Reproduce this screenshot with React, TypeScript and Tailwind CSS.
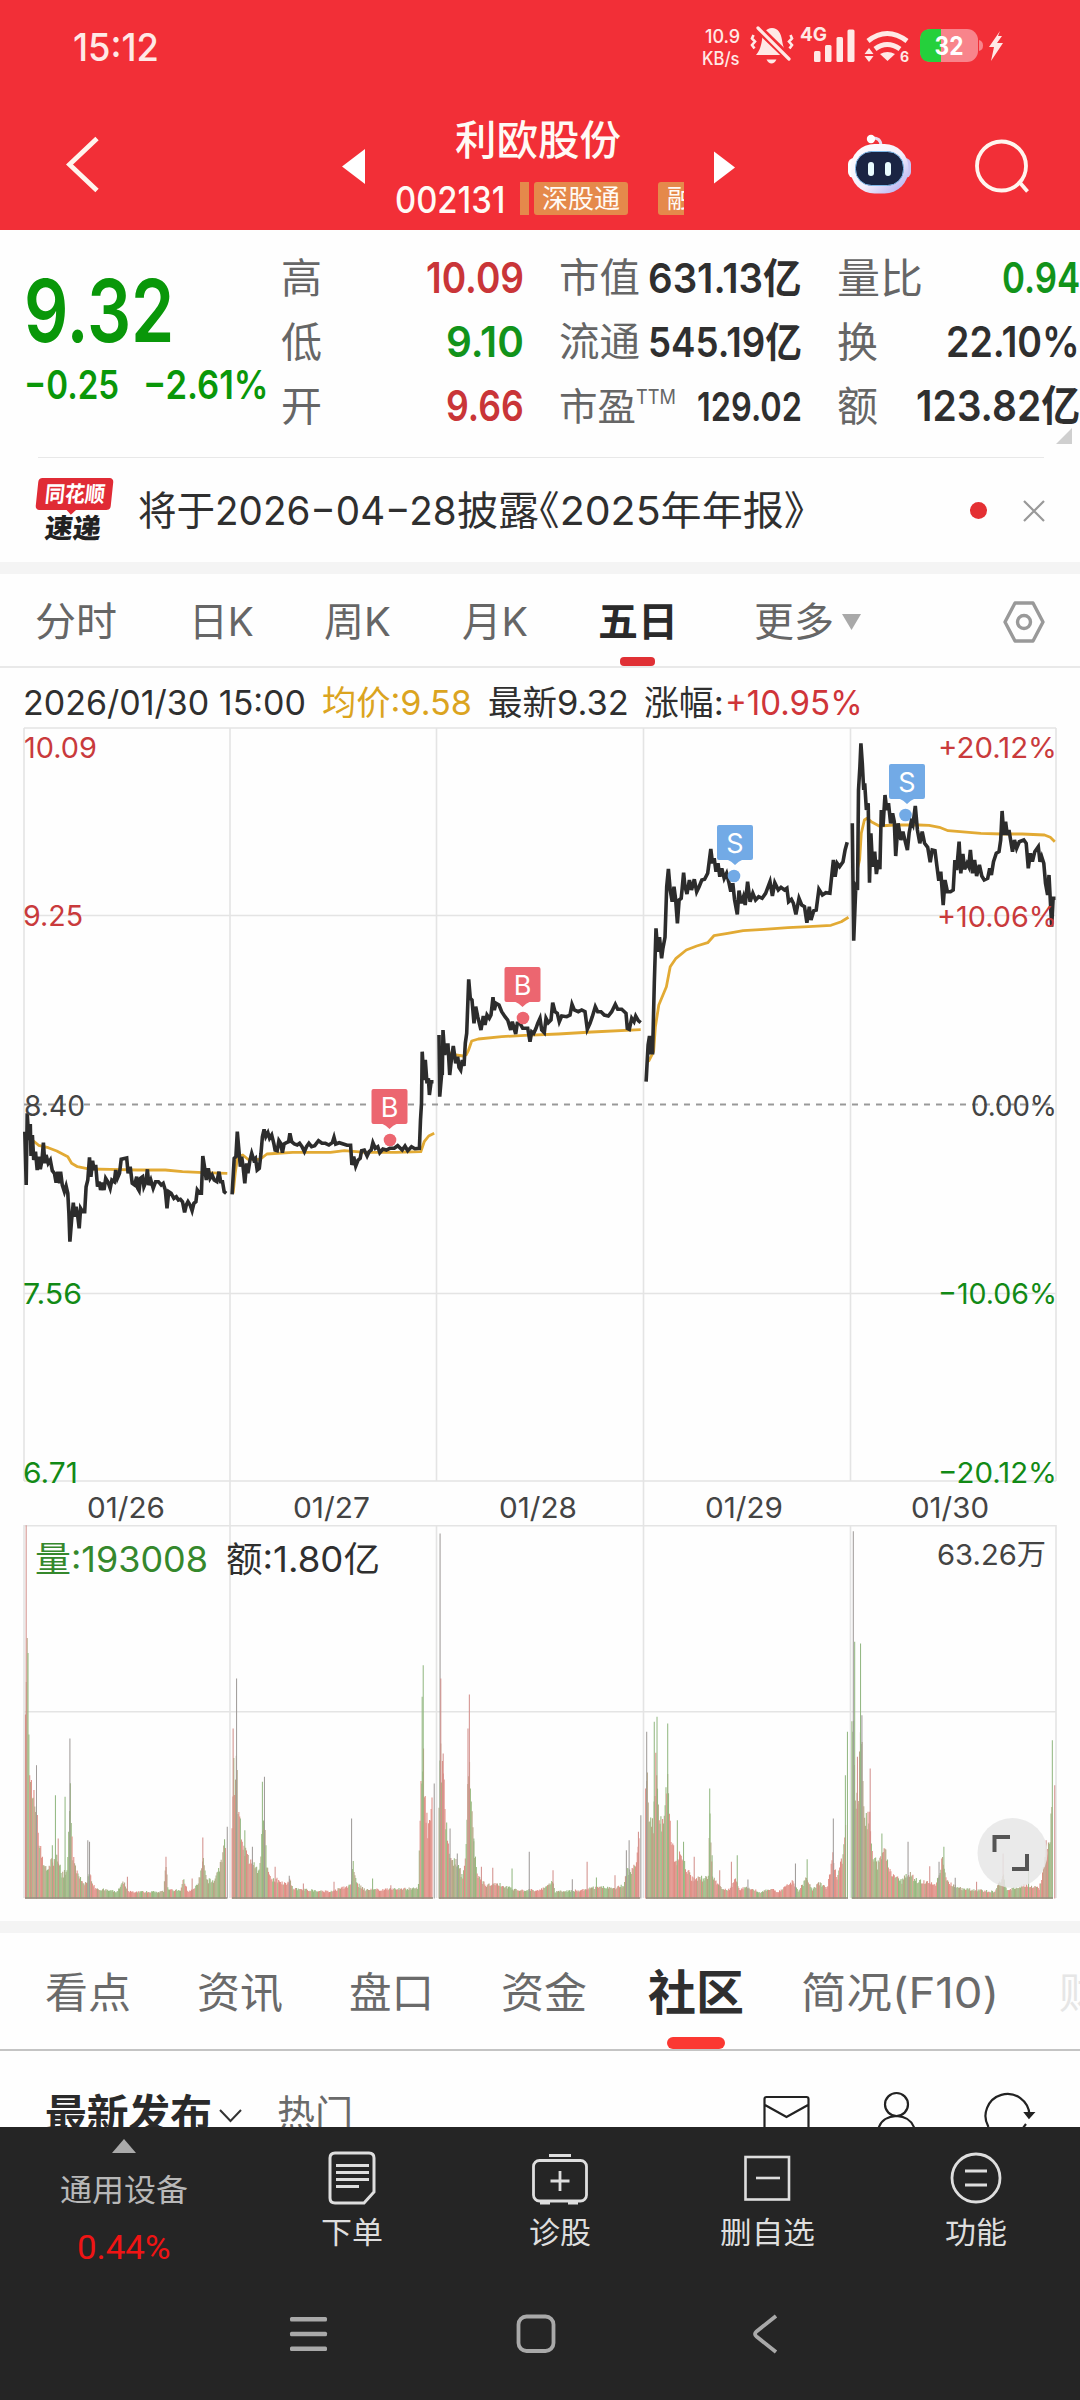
import React, { useLayoutEffect, useRef, useState } from 'react';

type FitProps = { className?: string; children: React.ReactNode };

/** Single line of text condensed or expanded to fill the width of its box. */
function Fit({ className = '', children }: FitProps) {
  const outer = useRef<HTMLSpanElement>(null);
  const inner = useRef<HTMLSpanElement>(null);
  const [scale, setScale] = useState(1);
  useLayoutEffect(() => {
    if (outer.current && inner.current) {
      setScale(outer.current.clientWidth / inner.current.offsetWidth);
    }
  }, []);
  return (
    <span ref={outer} className={'inline-block shrink-0 whitespace-nowrap leading-none ' + className}>
      <span ref={inner} className="inline-block origin-left" style={{ transform: `scaleX(${scale})` }}>
        {children}
      </span>
    </span>
  );
}

/* ---------- status bar ---------- */

function StatusBar() {
  return (
    <div className="flex h-[94px] items-center pl-[73px] text-[#ffe9e6]">
      <Fit className="w-[86px] text-[38px] font-medium">15:12</Fit>
      <div className="ml-[543px] flex w-[38px] flex-col items-end gap-[4px] font-medium">
        <Fit className="w-[35px] text-[19px]">10.9</Fit>
        <Fit className="w-[38px] text-[18px]">KB/s</Fit>
      </div>
      <svg className="ml-[8px] h-[94px] w-[256px] shrink-0" viewBox="748 0 256 94" fill="#ffe9e6">
        <path d="M756 55c4-5 5-9 6-15 1-7 4-12 10-12 6 0 9 5 10 12 1 6 2 10 6 15z" />
        <path d="M766.500 59.500h10q-2 4-5 4t-5-4z" />
        <path d="M757 27l34 33" stroke="#f22f37" strokeWidth="8" />
        <path d="M758 28l31 31" stroke="#ffe9e6" strokeWidth="3.200" strokeLinecap="round" />
        <path d="M753.500 35l-1.500 3.500 3 3-3 3.500 2.500 3.500M790.500 35l1.500 3.500-3 3 3 3.500-2.500 3.500" stroke="#ffe9e6" strokeWidth="2.600" fill="none" />
        <text x="800" y="41" fontSize="19" fontWeight="700" textLength="27" lengthAdjust="spacingAndGlyphs">4G</text>
        <rect x="814" y="51" width="6.500" height="11" rx="1.500" />
        <rect x="825" y="45" width="6.500" height="17" rx="1.500" />
        <rect x="836.500" y="37" width="6.500" height="25" rx="1.500" />
        <rect x="847.500" y="29.500" width="7" height="32.500" rx="1.500" />
        <g fill="none" stroke="#ffe9e6" strokeWidth="5">
          <path d="M868 41q19-15 39 0" />
          <path d="M875 49q12-9 25 0" />
        </g>
        <path d="M880 54q7.500-4 15 0l-7.500 7z" />
        <path d="M869 48l4.500 6h-9zM869 62l4.500-6h-9z" />
        <text x="900" y="62" fontSize="14" fontWeight="700">6</text>
        <rect x="920" y="29" width="58" height="33" rx="11" fill="#f8848b" />
        <path d="M979 40q4 1 4 5.500t-4 5.500z" fill="#f8848b" />
        <path d="M941 29h-10q-11 0-11 11v11q0 11 11 11h10z" fill="#25d03c" />
        <text x="934.500" y="54.500" fontSize="25" fontWeight="700" fill="#fff" textLength="29" lengthAdjust="spacingAndGlyphs">32</text>
        <path d="M1000 31l-11 16h5l-3 14 12-18h-6l5-7h-4z" />
      </svg>
    </div>
  );
}

/* ---------- title bar ---------- */

function TitleBar() {
  return (
    <div className="flex h-[136px] text-[#fffaf5]">
      <svg className="ml-[60px] h-[136px] w-[50px] shrink-0" viewBox="60 94 50 136">
        <path d="M97 138.500L69.500 164.500 97 190.500" fill="none" stroke="#fff5ee" strokeWidth="4.800" />
      </svg>
      <svg className="ml-[230px] h-[136px] w-[30px] shrink-0" viewBox="340 94 30 136" fill="#fff">
        <path d="M342 166.500L365 149v35z" />
      </svg>
      <div className="ml-[25px] flex w-[289px] flex-col items-start">
        <div className="mt-[26px] h-[46px] pl-[60px]">
          <Fit className="w-[166px] text-[41px] font-medium">利欧股份</Fit>
        </div>
        <div className="mt-[16px] flex h-[33px] w-[289px] items-center overflow-hidden">
          <Fit className="w-[110px] pt-[1px] text-[37px] font-medium">002131</Fit>
          <span className="ml-[15px] h-[33px] w-[9px] shrink-0 bg-[#e5894b]" />
          <span className="ml-[5px] flex h-[33px] w-[94px] shrink-0 items-center justify-center rounded-[3px] bg-[#e5894b]">
            <Fit className="w-[78px] text-[26px]">深股通</Fit>
          </span>
          <span className="ml-[30px] flex h-[33px] w-[94px] shrink-0 items-center rounded-[3px] bg-[#e5894b] pl-[9px] text-[26px] leading-none">
            融
          </span>
        </div>
      </div>
      <svg className="ml-[26px] h-[136px] w-[30px] shrink-0" viewBox="710 94 30 136" fill="#fff">
        <path d="M735 167.500L714 151.500v32z" />
      </svg>
      <svg className="ml-[105px] h-[136px] w-[70px] shrink-0" viewBox="845 94 70 136">
        <defs>
          <linearGradient id="shell" x1="0" x2="1" y1="0" y2="1">
            <stop offset="0" stopColor="#fff" />
            <stop offset="0.55" stopColor="#f4effb" />
            <stop offset="1" stopColor="#a9a6f0" />
          </linearGradient>
        </defs>
        <path d="M871 138q10-1 10 8" fill="none" stroke="#e9dcf0" strokeWidth="3" />
        <circle cx="871" cy="139" r="4.200" fill="#fff" />
        <rect x="848" y="158" width="12" height="20" rx="6" fill="#fff" />
        <rect x="899" y="158" width="12" height="20" rx="6" fill="#c9c4f3" />
        <rect x="850.500" y="144" width="58" height="49.500" rx="24" fill="url(#shell)" />
        <rect x="855.500" y="151.500" width="48" height="34" rx="16" fill="#1a2443" stroke="#7db7e8" strokeWidth="1" />
        <rect x="868" y="162" width="6" height="14" rx="3" fill="#eafcff" />
        <rect x="885" y="162" width="6" height="14" rx="3" fill="#eafcff" />
      </svg>
      <svg className="ml-[55px] h-[136px] w-[65px] shrink-0" viewBox="970 94 65 136" fill="none" stroke="#fff5ee" strokeWidth="3.800">
        <circle cx="1001.500" cy="166" r="24.500" />
        <path d="M1018.500 181l9 10.500" />
      </svg>
    </div>
  );
}

/* ---------- quote summary ---------- */

type CellProps = { label: React.ReactNode; children: React.ReactNode };

function Cell({ label, children }: CellProps) {
  return (
    <div className="flex h-[64px] items-center justify-between text-[#666]">
      {label}
      {children}
    </div>
  );
}

function Quote() {
  return (
    <div className="flex h-[227px] overflow-hidden">
      <div className="w-[281px] shrink-0 pl-[24px] text-[#099709]">
        <div className="mt-[37px] h-[86px]">
          <Fit className="w-[150px] text-[87px] font-semibold">9.32</Fit>
        </div>
        <div className="mt-[12px] flex h-[40px]">
          <Fit className="w-[95px] text-[39px] font-semibold">−0.25</Fit>
          <Fit className="ml-[24px] w-[126px] text-[39px] font-semibold">−2.61%</Fit>
        </div>
      </div>
      <div className="w-[243px] shrink-0 pt-[16px]">
        <Cell label={<Fit className="w-[41px] text-[41px]">高</Fit>}>
          <Fit className="w-[98px] text-[42px] font-semibold text-[#c93538]">10.09</Fit>
        </Cell>
        <Cell label={<Fit className="w-[41px] text-[41px]">低</Fit>}>
          <Fit className="w-[78px] text-[42px] font-semibold text-[#12931a]">9.10</Fit>
        </Cell>
        <Cell label={<Fit className="w-[41px] text-[41px]">开</Fit>}>
          <Fit className="w-[78px] text-[42px] font-semibold text-[#c93538]">9.66</Fit>
        </Cell>
      </div>
      <div className="ml-[35px] w-[243px] shrink-0 pt-[16px]">
        <Cell label={<Fit className="w-[81px] text-[40px]">市值</Fit>}>
          <Fit className="w-[154px] text-[41px] font-semibold text-[#2f2f2f]">631.13亿</Fit>
        </Cell>
        <Cell label={<Fit className="w-[81px] text-[40px]">流通</Fit>}>
          <Fit className="w-[154px] text-[41px] font-semibold text-[#2f2f2f]">545.19亿</Fit>
        </Cell>
        <Cell
          label={
            <span className="flex items-start">
              <Fit className="w-[77px] text-[38px]">市盈</Fit>
              <Fit className="w-[40px] text-[20px]">TTM</Fit>
            </span>
          }
        >
          <Fit className="w-[105px] text-[39px] font-semibold text-[#2f2f2f]">129.02</Fit>
        </Cell>
      </div>
      <div className="relative ml-[35px] w-[243px] shrink-0 pt-[16px]">
        <Cell label={<Fit className="w-[86px] text-[41px]">量比</Fit>}>
          <Fit className="w-[78px] text-[42px] font-semibold text-[#12931a]">0.94</Fit>
        </Cell>
        <Cell label={<Fit className="w-[41px] text-[41px]">换</Fit>}>
          <Fit className="w-[134px] text-[42px] font-semibold text-[#2f2f2f]">22.10%</Fit>
        </Cell>
        <Cell label={<Fit className="w-[41px] text-[41px]">额</Fit>}>
          <Fit className="w-[164px] text-[42px] font-semibold text-[#2f2f2f]">123.82亿</Fit>
        </Cell>
        <svg className="absolute right-[8px] bottom-[13px] h-[16px] w-[16px]" viewBox="0 0 16 16">
          <path d="M16 0v16H0z" fill="#cfcfcf" />
        </svg>
      </div>
    </div>
  );
}

function Notice() {
  return (
    <div className="flex h-[105px] items-center">
      <div className="flex w-[138px] shrink-0 flex-col items-start pl-[37px]">
        <div className="relative flex h-[32px] w-[75px] -skew-x-6 items-center justify-center rounded-[4px] bg-[#e02b35]">
          <span className="absolute bottom-[-3px] left-[32px] h-[8px] w-[8px] rotate-45 bg-[#e02b35]" />
          <Fit className="w-[60px] text-[22px] font-bold text-white">同花顺</Fit>
        </div>
        <div className="mt-[5px] ml-[8px] -skew-x-6">
          <Fit className="w-[56px] text-[27px] font-black text-[#222]">速递</Fit>
        </div>
      </div>
      <Fit className="w-[319px] text-[40px] text-[#2f2f2f]">将于2026−04−28</Fit>
      <Fit className="w-[347px] text-[40px] text-[#2f2f2f] [font-feature-settings:'halt']">披露《2025年年报》</Fit>
      <span className="ml-[166px] h-[17px] w-[17px] shrink-0 rounded-full bg-[#e43033]" />
      <svg className="ml-[36px] h-[22px] w-[22px] shrink-0" viewBox="0 0 22 22">
        <path d="M1 1l20 20M21 1L1 21" stroke="#999" strokeWidth="2.200" />
      </svg>
    </div>
  );
}

/* ---------- chart period tabs ---------- */

function PeriodTabs() {
  return (
    <div className="flex h-[94px] items-center border-b-2 border-[#e9e9e9] pt-[4px] pl-[35px] text-[40px] text-[#666]">
      <Fit className="w-[82px]">分时</Fit>
      <Fit className="ml-[72px] w-[65px]">日K</Fit>
      <Fit className="ml-[70px] w-[67px]">周K</Fit>
      <Fit className="ml-[71px] w-[66px]">月K</Fit>
      <div className="relative ml-[70px] flex h-[88px] items-center">
        <Fit className="w-[80px] font-bold text-[#2a2a2a]">五日</Fit>
        <span className="absolute bottom-0 left-[22px] h-[9px] w-[35px] rounded-[4px] bg-[#e03035]" />
      </div>
      <Fit className="ml-[76px] w-[80px]">更多</Fit>
      <svg className="ml-[8px] h-[16px] w-[19px]" viewBox="0 0 19 16">
        <path d="M0 0h19L9.500 16z" fill="#a9a9a9" />
      </svg>
      <svg className="ml-[142px] h-[42px] w-[42px]" viewBox="0 0 42 42" fill="none" stroke="#999" strokeWidth="3.400">
        <path d="M12 2h18l10 19L30 40H12L2 21z" strokeLinejoin="round" />
        <circle cx="21" cy="21" r="6.500" />
      </svg>
    </div>
  );
}

function InfoLine() {
  return (
    <div className="flex h-[57px] items-center pt-[12px] pl-[23px] text-[34px] text-[#2f2f2f]">
      <Fit className="w-[283px]">2026/01/30 15:00</Fit>
      <Fit className="ml-[16px] w-[150px] text-[#dba41f]">均价:9.58</Fit>
      <Fit className="ml-[16px] w-[141px]">最新9.32</Fit>
      <Fit className="ml-[15px] w-[80px]">涨幅:</Fit>
      <Fit className="ml-[1px] w-[138px] text-[#cf3539]">+10.95%</Fit>
    </div>
  );
}

/* ---------- chart ---------- */

type Frame = { x: number; y: number; sx: number; sy: number };

const LEFT: Frame = { x: 0, y: 1000, sx: 2.904, sy: 3 };
const MIDDLE: Frame = { x: 425, y: 960, sx: 3, sy: 3 };
const RIGHT: Frame = { x: 540, y: 700, sx: 2.904, sy: 3 };

/** Projects "x,y x,y" samples of a frame on to the canvas. */
function project(samples: string, f: Frame): string {
  return samples
    .split(' ')
    .map((pair) => {
      const [x, y] = pair.split(',').map(Number);
      return `${(f.x + x / f.sx).toFixed(1)},${(f.y + y / f.sy).toFixed(1)}`;
    })
    .join(' ');
}

const PRICE: [string, Frame][] = [
  ['72,395 76,555 79,340 84,420 88,372 90,468 94,405 98,480 103,455 108,510 113,470 117,508 122,480 126,428 130,490 134,465 140,490 146,480 152,512 158,520 163,548 168,515 173,550 176,515 181,555 187,575 192,558 197,580 200,640 203,725 208,660 213,608 217,650 221,620 226,650 230,685 234,625 240,635 246,635 250,560 255,540 260,472 264,530 269,482 273,510 278,495 283,560 288,545 292,570 297,548 302,570 307,535 313,545 320,565 325,540 332,545 336,510 341,535 347,520 352,478 368,474 372,520 378,500 384,550 391,555 397,530 400,565 404,572 408,535 414,530 418,560 424,545 428,508 432,555 438,540 445,565 452,545 460,545 468,555 474,550 480,570 485,625 490,575 497,580 505,595 512,590 518,600 524,598 530,605 536,637 541,615 546,605 552,615 558,632 563,610 569,605 573,570 580,580 585,580 589,468 594,500 599,540 605,505 610,535 616,525 622,540 630,545 636,515 641,545 646,545 651,575 657,580', LEFT],
  ['674,583 680,475 685,470 689,395 693,440 698,500 702,470 706,500 711,550 716,490 720,520 726,480 731,460 737,480 742,475 747,510 753,505 758,460 762,410 767,388 772,410 778,398 783,415 789,405 795,430 799,450 805,452 810,422 815,430 820,458 825,432 832,428 838,425 842,400 847,425 855,432 863,435 870,430 877,440 884,455 890,440 897,430 905,440 914,437 925,422 935,430 945,430 955,435 965,428 970,412 975,432 985,428 997,432 1008,436 1018,436 1022,495 1027,470 1033,498 1040,480 1046,475 1050,452 1058,450 1066,468 1072,455 1078,450 1083,428 1090,445 1097,440 1103,458 1112,447 1122,450 1132,445 1145,445 1155,437 1168,450 1176,438 1184,452 1195,440 1205,446 1218,445 1221,360 1224,310 1226,155 1231,240 1235,180 1240,250 1244,235 1247,285 1252,245 1259,245', LEFT],
  ['42,225 44,410 50,340 52,340 54,210 59,285 63,255 69,255 74,345 80,290 85,258 92,310 98,290 102,322 107,330 112,300 117,318 121,250 125,220 131,58 136,115 141,120 147,190 152,140 158,170 168,210 175,168 180,195 186,165 193,175 198,165 204,112 208,150 213,130 222,135 230,155 240,170 248,180 257,210 262,185 272,222 277,190 285,190 293,205 300,205 308,205 315,245 320,215 326,220 333,205 338,190 345,175 350,210 358,218 363,175 370,188 378,180 383,128 390,155 397,160 403,185 410,168 425,170 435,165 441,133 448,150 460,155 470,150 480,155 487,208 495,190 502,170 511,140 518,155 528,155 538,165 550,168 560,155 571,133 578,148 590,148 603,160 607,205 613,208 620,175 627,185 632,168 640,182 647,188', MIDDLE],
  ['308,1145 314,1035 318,1008 322,1058 327,1058 332,850 337,685 342,755 347,712 353,775 357,745 363,712 368,560 373,507 378,570 384,605 389,560 394,600 399,670 404,600 410,595 413,565 417,518 421,560 427,582 434,540 440,570 448,538 455,575 462,560 470,540 478,538 487,520 492,480 496,447 501,490 506,475 511,515 517,490 522,530 528,505 535,535 542,520 548,545 554,575 560,550 565,600 573,643 578,572 585,610 591,590 596,615 603,545 610,605 618,580 626,600 635,590 645,595 655,580 668,545 675,588 682,548 692,570 700,562 710,570 717,565 722,605 730,598 736,610 743,643 752,595 760,615 768,620 775,668 782,620 787,660 795,632 802,630 810,568 820,585 830,578 842,580 848,520 852,480 857,530 863,490 870,500 880,485 886,450 892,427', RIGHT],
  ['907,370 911,722 917,560 922,570 925,270 929,200 932,130 936,190 940,270 943,250 948,330 953,310 957,548 961,400 966,500 972,455 977,522 983,480 987,508 991,330 996,380 1002,285 1007,330 1012,310 1018,370 1024,340 1029,365 1033,468 1040,370 1048,420 1054,395 1062,430 1067,450 1072,400 1078,365 1083,375 1090,318 1096,390 1103,430 1110,395 1117,430 1126,442 1133,487 1139,450 1147,452 1153,500 1158,542 1164,515 1171,615 1176,540 1183,575 1192,575 1200,570 1205,480 1210,510 1217,425 1222,520 1228,462 1233,508 1240,490 1245,500 1250,450 1256,520 1262,480 1268,528 1276,495 1283,528 1290,540 1300,535 1306,505 1311,525 1317,485 1325,460 1333,455 1338,420 1342,333 1347,405 1352,365 1357,405 1362,390 1372,455 1378,420 1384,445 1392,425 1405,420 1412,430 1418,505 1424,460 1430,485 1437,455 1447,440 1452,485 1457,470 1463,490 1468,550 1474,585 1478,525 1482,600 1486,680 1490,595 1497,595', RIGHT],
];

const AVERAGE: [string, Frame][] = [
  ['90,420 100,425 112,436 140,443 165,453 197,470 208,490 225,500 260,507 320,508 400,510 480,510 530,515 590,518 660,520', LEFT],
  ['677,580 683,520 690,470 705,465 720,478 755,478 775,462 850,457 960,457 1000,452 1060,457 1150,457 1222,455 1232,425 1245,408 1261,400', LEFT],
  ['65,275 92,285 115,288 124,284 130,272 140,243 160,237 230,230 300,226 400,222 500,216 647,209', MIDDLE],
  ['315,1085 330,1055 335,980 345,915 367,860 378,800 395,775 425,750 455,738 487,728 505,707 545,700 590,692 650,688 720,683 780,680 845,676 875,665 896,652', RIGHT],
  ['922,505 928,480 933,400 942,360 950,355 962,365 985,378 1030,375 1100,375 1130,376 1160,382 1185,392 1220,395 1280,400 1340,402 1400,402 1465,405 1482,412 1495,425', RIGHT],
];

type VolumeDay = { level: number[][]; spikes: number[][]; red: number };

const pairs = (s: string): number[][] => s.split(' ').map((p) => p.split(',').map(Number));

const VOLUME: VolumeDay[] = [
  {
    red: 0.35,
    level: pairs('74,490 79,730 82,690 86,350 95,290 105,290 110,190 120,130 135,80 150,110 170,120 180,70 195,80 203,340 208,200 212,120 225,70 245,40 262,70 275,30 340,20 360,50 372,20 475,20 482,100 488,25 525,25 533,60 545,20 575,40 590,110 600,55 620,50 640,100 655,170'),
    spikes: pairs('76,1120 106,400 161,310 169,180 189,305 203,480 255,175 260,170 482,125 589,183 652,170 660,215 370,65 558,60 152,160'),
  },
  {
    red: 0.5,
    level: pairs('674,200 678,430 682,330 687,450 692,250 700,180 715,130 735,110 752,70 758,130 763,250 770,180 776,90 790,60 830,45 842,60 850,30 960,20 1020,40 1025,110 1035,45 1060,25 1215,30 1222,300 1228,450 1235,300 1242,200 1255,280'),
    spikes: pairs('677,510 687,660 698,240 711,205 733,155 762,350 768,365 799,95 840,68 970,50 1021,240 1082,60 1135,40 1226,605 1229,700 1261,345 881,45'),
  },
  {
    red: 0.4,
    level: pairs('1275,250 1279,500 1283,350 1287,410 1295,220 1310,120 1325,110 1345,60 1352,140 1358,300 1364,450 1369,260 1378,130 1390,60 1410,40 1440,45 1500,25 1568,25 1605,50 1612,20 1700,25 1735,35 1780,30 1812,40 1820,80 1845,90 1857,170'),
    spikes: pairs('1278,1095 1280,660 1287,435 1307,210 1363,612 1359,510 1376,180 1328,135 1398,95 1431,92 1487,90 1537,140 1606,85 1662,58 1705,110 1732,63 1786,70 1819,145 1827,175 1854,200 1861,250'),
  },
  {
    red: 0.6,
    level: pairs('1875,300 1879,400 1886,230 1898,220 1904,420 1909,350 1916,220 1928,210 1940,400 1946,220 1960,110 1978,130 1993,90 2008,60 2058,60 2061,270 2068,70 2088,35 2118,25 2138,60 2148,25 2168,35 2208,18 2238,30 2258,18 2303,50 2318,20 2343,60 2358,25 2378,45 2403,30 2418,130 2430,60 2448,130 2457,240'),
    spikes: pairs('1878,500 1900,530 1908,545 1939,525 1967,235 1985,170 2016,125 2061,330 2068,130 2090,85 2124,110 2141,130 2172,57 2310,105 2344,118 2420,240 2455,370 2461,500'),
  },
  {
    red: 0.38,
    level: pairs('2474,550 2480,450 2486,280 2493,300 2500,550 2508,300 2518,210 2526,270 2533,140 2548,100 2568,150 2583,80 2618,50 2638,80 2658,55 2718,40 2738,120 2748,50 2788,30 2888,20 2913,70 2923,25 2983,40 3018,30 3033,100 3048,170 3056,300'),
    spikes: pairs('2478,1102 2482,770 2490,425 2499,765 2503,550 2527,390 2561,195 2637,170 2700,97 2727,110 2741,155 2774,62 2836,50 2913,135 2987,100 3038,175 3056,475 3063,340'),
  },
];

const VOLUME_BASE = 1898.5;

type Bar = { x: number; h: number; color: string };

function buildBars(): Bar[] {
  let seed = 7;
  const random = () => {
    seed = (seed * 16807) % 2147483647;
    return seed / 2147483647;
  };
  const bars: Bar[] = [];
  for (const day of VOLUME) {
    const first = day.level[0][0];
    const last = day.level[day.level.length - 1][0];
    let k = 0;
    for (let x = first; x <= last; x += 2.46) {
      while (k < day.level.length - 2 && day.level[k + 1][0] < x) k++;
      const [x0, h0] = day.level[k];
      const [x1, h1] = day.level[k + 1];
      const t = Math.min(1, Math.max(0, (x - x0) / (x1 - x0)));
      const wave = 0.25 * Math.sin(x / 23) + 0.15 * Math.sin(x / 9);
      const pick = random() * 0.7 + 0.15 + wave;
      const color = pick < day.red ? '#e08d84' : random() < 0.45 ? '#b5a583' : '#97b97e';
      bars.push({ x: x / 2.904, h: ((h0 + (h1 - h0) * t) * (0.85 + random() * 0.3)) / 3, color });
    }
    for (const [x, h] of day.spikes) {
      const r = random();
      bars.push({ x: x / 2.904, h: h / 3, color: r < 0.35 ? '#d3918d' : r < 0.7 ? '#94b984' : '#a09c9a' });
    }
  }
  return bars;
}

const BARS = buildBars();

function Marker({ x, y, dotX, dotY, letter, color }: { x: number; y: number; dotX: number; dotY: number; letter: string; color: string }) {
  return (
    <g>
      <path
        transform={`translate(${x} ${y})`}
        d="M2 0H34q2 0 2 2V33q0 2-2 2H25q-3 1-7 5q-4-4-7-5H2q-2 0-2-2V2q0-2 2-2z"
        fill={color}
      />
      <text x={x + 18} y={y + 27.5} textAnchor="middle" fontSize="27" fill="#fff">{letter}</text>
      <circle cx={dotX} cy={dotY} r="6.300" fill={color} />
    </g>
  );
}

type LabelProps = { x: number; y: number; w: number; size?: number; color: string; children: string };

function Label({ x, y, w, size = 29, color, children }: LabelProps) {
  return (
    <text x={x} y={y} fontSize={size} fill={color} textLength={w} lengthAdjust="spacingAndGlyphs">
      {children}
    </text>
  );
}

function Chart() {
  const red = '#c93a3c';
  const green = '#128a16';
  const gray = '#444';
  return (
    <svg className="block h-[1196px] w-[1080px]" viewBox="0 725 1080 1196">
      <g stroke="#e4e4e4" strokeWidth="1.600" fill="none">
        <path d="M24 728H1056M24 915.500H1056M24 1293.500H1056M24 1481H1056" />
        <path d="M24 728V1481M230 728V1481M436.500 728V1481M643.500 728V1481M850.500 728V1481M1056 728V1481" />
        <path d="M24 1525.700H1056M24 1711.700H1056" />
        <path d="M24 1525V1898M230 1481V1898M436.500 1525V1898M643.500 1481V1898M850.500 1525V1898M1056 1525V1898" />
      </g>
      <path d="M24 1104.500H1056" stroke="#999" strokeWidth="1.800" strokeDasharray="6 6" />

      {BARS.map((b, i) => (
        <path key={i} d={`M${b.x.toFixed(2)} ${VOLUME_BASE}v${(-b.h).toFixed(1)}`} stroke={b.color} strokeWidth="1.050" />
      ))}
      <path d="M25 1898H227M232 1898H433M439 1898H640M646 1898H848M852 1898H1053" stroke="#958f80" strokeWidth="1.500" />

      {AVERAGE.map(([samples, frame], i) => (
        <polyline key={i} points={project(samples, frame)} fill="none" stroke="#e2aa34" strokeWidth="2.800" strokeLinejoin="round" />
      ))}
      {PRICE.map(([samples, frame], i) => (
        <polyline key={i} points={project(samples, frame)} fill="none" stroke="#2c2c2c" strokeWidth="3.600" />
      ))}

      <Label x={24} y={758} w={73} color={red}>10.09</Label>
      <Label x={23} y={926} w={60} color={red}>9.25</Label>
      <Label x={24} y={1116} w={61} color={gray}>8.40</Label>
      <Label x={23} y={1304} w={59} color={green}>7.56</Label>
      <Label x={23} y={1483} w={55} color={green}>6.71</Label>
      <Label x={938} y={758} w={119} color={red}>+20.12%</Label>
      <Label x={937} y={927} w={120} color={red}>+10.06%</Label>
      <Label x={971} y={1116} w={86} color={gray}>0.00%</Label>
      <Label x={938} y={1304} w={119} color={green}>−10.06%</Label>
      <Label x={938} y={1483} w={119} color={green}>−20.12%</Label>

      <Label x={87} y={1518} w={78} color={gray}>01/26</Label>
      <Label x={293} y={1518} w={77} color={gray}>01/27</Label>
      <Label x={499} y={1518} w={78} color={gray}>01/28</Label>
      <Label x={705} y={1518} w={78} color={gray}>01/29</Label>
      <Label x={911} y={1518} w={78} color={gray}>01/30</Label>

      <Label x={35} y={1572} w={173} size={35} color="#35882c">量:193008</Label>
      <Label x={226} y={1572} w={154} size={35} color="#2f2f2f">额:1.80亿</Label>
      <Label x={937} y={1565} w={109} size={29} color={gray}>63.26万</Label>

      <Marker x={371.500} y={1089} dotX={390} dotY={1140} letter="B" color="#ec6670" />
      <Marker x={504.500} y={967} dotX={523} dotY={1018} letter="B" color="#ec6670" />
      <Marker x={717} y={825} dotX={734} dotY={876} letter="S" color="#72aae6" />
      <Marker x={889} y={764} dotX={905.500} dotY={815} letter="S" color="#72aae6" />

      <circle cx="1012.500" cy="1853" r="35" fill="#e6e6e6" fillOpacity="0.850" />
      <path d="M994.500 1852V1837H1010M1012 1869H1027V1854" fill="none" stroke="#555" strokeWidth="4" />
    </svg>
  );
}

/* ---------- section tabs and feed header ---------- */

function SectionTabs() {
  return (
    <div className="flex h-[118px] items-center overflow-hidden border-b-2 border-[#c4c4c4] pt-[4px] pl-[45px] text-[42px] text-[#6a6a6a]">
      <Fit className="w-[86px]">看点</Fit>
      <Fit className="ml-[66px] w-[86px]">资讯</Fit>
      <Fit className="ml-[66px] w-[85px]">盘口</Fit>
      <Fit className="ml-[67px] w-[86px]">资金</Fit>
      <div className="relative ml-[61px] flex h-[112px] items-center">
        <Fit className="w-[96px] text-[48px] font-bold text-[#2f2f2f]">社区</Fit>
        <span className="absolute bottom-0 left-[19px] h-[12px] w-[58px] rounded-[6px] bg-[#fb3832]" />
      </div>
      <Fit className="ml-[57px] w-[198px]">简况(F10)</Fit>
      <span className="ml-[60px] shrink-0 leading-none text-[#e6e6e6]">财</span>
    </div>
  );
}

function FeedHeader() {
  return (
    <div className="flex h-[76px] items-start overflow-hidden pl-[45px]">
      <Fit className="mt-[43px] w-[167px] text-[41px] font-bold text-[#2a2a2a]">最新发布</Fit>
      <svg className="mt-[58px] ml-[7px] h-[14px] w-[23px]" viewBox="0 0 23 14">
        <path d="M1 1l10.500 11L22 1" fill="none" stroke="#333" strokeWidth="2" />
      </svg>
      <Fit className="mt-[43px] ml-[35px] w-[76px] text-[39px] text-[#6a6a6a]">热门</Fit>
      <svg className="ml-[407px] h-[76px] w-[280px] shrink-0" viewBox="760 2051 280 76" fill="none" stroke="#222" strokeWidth="2.200">
        <path d="M764.500 2130V2099q0-2 2-2h40q2 0 2 2v31M765 2105l21.500 12 21.500-12" />
        <circle cx="896.500" cy="2104.500" r="11.500" />
        <path d="M878 2131q2-14 18.500-15q16 1 18.500 15" />
        <path d="M988.500 2127a22 22 0 1 1 41-12" />
        <path d="M1025.500 2113h7.500l-4 4.500zM1023 2128l3-4" fill="#222" />
      </svg>
    </div>
  );
}

/* ---------- bottom bars ---------- */

function BottomBar() {
  return (
    <div className="flex h-[147px] text-[30px] text-[#dedede]">
      <div className="ml-[60px] flex w-[128px] flex-col items-center text-[#b8b8b8]">
        <svg className="mt-[12px] h-[14px] w-[24px]" viewBox="0 0 24 14">
          <path d="M12 0l12 14H0z" fill="#aaa" />
        </svg>
        <Fit className="mt-[21px] w-[128px] text-[31px]">通用设备</Fit>
        <Fit className="mt-[26px] w-[94px] font-['Roboto'] text-[33px] font-normal text-[#f01414]">0.44%</Fit>
      </div>
      <div className="ml-[134px] flex w-[60px] flex-col items-center">
        <svg className="mt-[20px] h-[62px] w-[60px]" viewBox="322 2147 60 62" fill="none" stroke="#dedede" strokeWidth="3">
          <path d="M335 2153h34q5 0 5 5v34l-10 11h-29q-5 0-5-5v-40q0-5 5-5z" />
          <path d="M336 2165.500h33M336 2172.500h33M336 2179.500h33M336 2186.500h23" strokeWidth="2.800" />
        </svg>
        <Fit className="mt-[8px] w-[62px]">下单</Fit>
      </div>
      <div className="ml-[148px] flex w-[60px] flex-col items-center">
        <svg className="mt-[20px] h-[62px] w-[60px]" viewBox="530 2147 60 62" fill="none" stroke="#dedede" strokeWidth="2.800">
          <rect x="533.500" y="2160.500" width="53" height="40.500" rx="6" />
          <path d="M549 2155.500h22M540 2203h10M568 2203h10M560 2171v20M550.500 2181h19" />
        </svg>
        <Fit className="mt-[8px] w-[62px]">诊股</Fit>
      </div>
      <div className="ml-[129px] flex w-[96px] flex-col items-center">
        <svg className="mt-[20px] h-[62px] w-[60px]" viewBox="737 2147 60 62" fill="none" stroke="#dedede" strokeWidth="2.600">
          <rect x="745.500" y="2157" width="43.500" height="42.500" />
          <path d="M756 2178h24" />
        </svg>
        <Fit className="mt-[8px] w-[95px]">删自选</Fit>
      </div>
      <div className="ml-[131px] flex w-[60px] flex-col items-center">
        <svg className="mt-[20px] h-[62px] w-[60px]" viewBox="946 2147 60 62" fill="none" stroke="#dedede" strokeWidth="2.800">
          <circle cx="976" cy="2178" r="24" />
          <path d="M965 2171h22M965 2185h22" />
        </svg>
        <Fit className="mt-[8px] w-[62px]">功能</Fit>
      </div>
    </div>
  );
}

function SystemNav() {
  return (
    <div className="flex h-[126px] pt-[36px]">
      <svg className="ml-[288px] h-[48px] w-[40px]" viewBox="288 2310 40 48" fill="#a9a9a9">
        <rect x="290" y="2317" width="37" height="4.600" rx="1.500" />
        <rect x="290" y="2331.700" width="37" height="4.600" rx="1.500" />
        <rect x="290" y="2346.500" width="37" height="4.600" rx="1.500" />
      </svg>
      <svg className="ml-[187px] h-[48px] w-[44px]" viewBox="515 2310 44 48">
        <rect x="518.500" y="2316.500" width="35" height="34.500" rx="8" fill="none" stroke="#a9a9a9" strokeWidth="3.800" />
      </svg>
      <svg className="ml-[191px] h-[48px] w-[32px]" viewBox="750 2310 32 48">
        <path d="M776 2316l-19.500 15.500q-3 2.500 0 5L776 2352" fill="none" stroke="#a9a9a9" strokeWidth="3.800" />
      </svg>
    </div>
  );
}

export default function App() {
  return (
    <div className="h-[2400px] w-[1080px] overflow-hidden bg-[#fefefe] font-['Inter','Noto_Sans_CJK_SC',sans-serif]">
      <header className="h-[230px] bg-[#f22f37]">
        <StatusBar />
        <TitleBar />
      </header>
      <Quote />
      <div className="mr-[36px] ml-[38px] h-px bg-[#e8e8e8]" />
      <Notice />
      <div className="mt-[-1px] h-[12px] bg-[#f4f4f4]" />
      <PeriodTabs />
      <InfoLine />
      <Chart />
      <div className="h-[12px] bg-[#f4f4f4]" />
      <SectionTabs />
      <FeedHeader />
      <footer className="h-[273px] bg-[#252525]">
        <BottomBar />
        <SystemNav />
      </footer>
    </div>
  );
}
